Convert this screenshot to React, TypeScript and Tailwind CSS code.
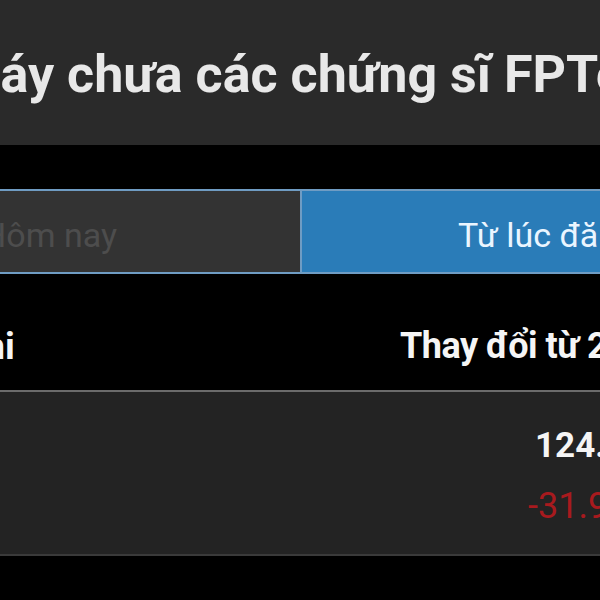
import React from 'react';

export default function App() {
  return (
    <div className="w-[600px] h-[600px] overflow-hidden bg-black font-['Roboto','Liberation_Sans',sans-serif]">
      {/* title bar */}
      <div className="h-[145px] bg-[#2a2a2a] pt-[49px] overflow-hidden">
        <div className="ml-[-45px] whitespace-nowrap text-[52px] leading-none font-bold text-[#e8e8e8]">
          Máy chưa các chứng sĩ FPTech
        </div>
      </div>

      <div className="h-[44px]" />

      {/* tabs */}
      <div className="flex h-[85px] border-y-2 border-[#6f9cc3] overflow-hidden">
        <div className="w-[300px] shrink-0 bg-[#333333] pt-[27px] overflow-hidden">
          <div className="ml-[-18px] whitespace-nowrap text-[34px] leading-none text-[#4d4d4d]">Hôm nay</div>
        </div>
        <div className="w-[2px] shrink-0 bg-[#6f9cc3]" />
        <div className="flex-1 bg-[#2a7cb8] pt-[27px] pl-[156px] overflow-hidden">
          <div className="whitespace-nowrap text-[34px] leading-none text-[#eaf5ff]">Từ lúc đăng ký</div>
        </div>
      </div>

      {/* table header */}
      <div className="flex h-[118px] pt-[54px] border-b-2 border-[#6b6b6b] overflow-hidden">
        <div className="w-[400px] shrink-0 overflow-hidden">
          <div className="ml-[-40px] whitespace-nowrap text-[37px] leading-none font-bold text-[#f5f5f5]">Chi</div>
        </div>
        <div className="whitespace-nowrap text-[36px] leading-none font-bold tracking-[-0.5px] text-[#f5f5f5]">Thay đổi từ 2020</div>
      </div>

      {/* row */}
      <div className="h-[164px] bg-[#232323] border-b-2 border-[#3a3a3a] pt-[36px] overflow-hidden">
        <div className="ml-[535px] whitespace-nowrap text-[35px] leading-none font-bold text-[#f5f5f5]">124.56</div>
        <div className="ml-[528px] mt-[25px] whitespace-nowrap text-[36px] leading-none text-[#a81a1e]">-31.96%</div>
      </div>
    </div>
  );
}
